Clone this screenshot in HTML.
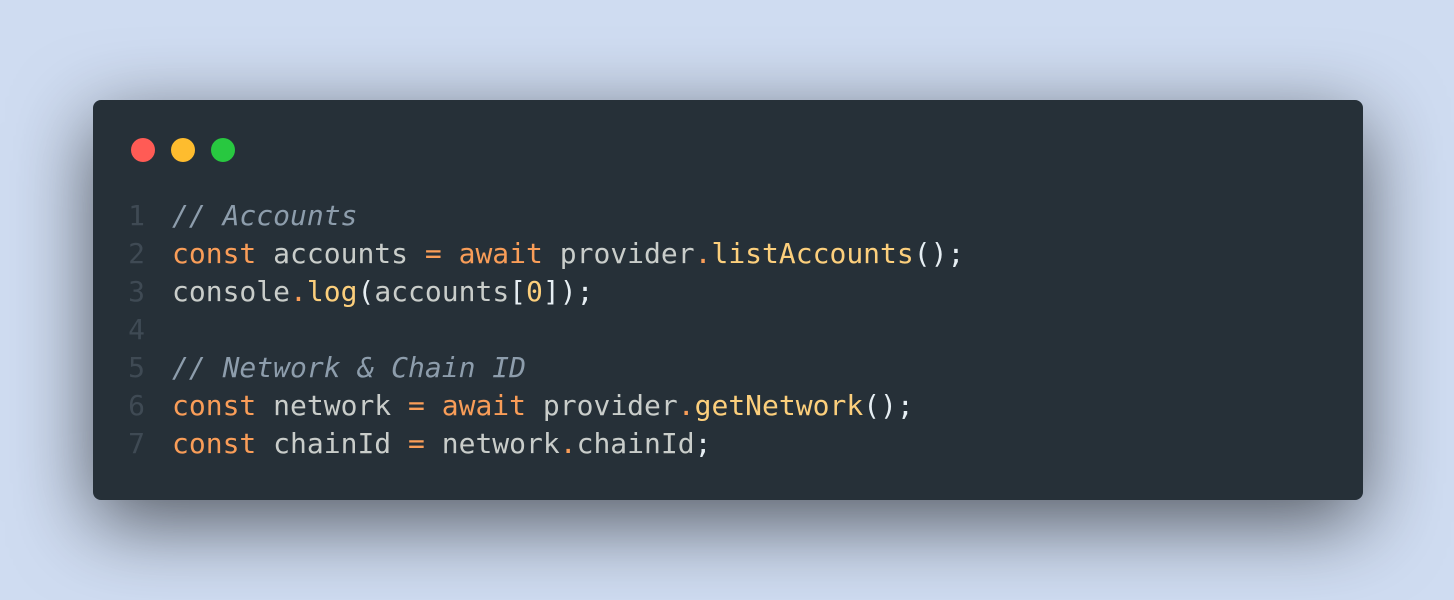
<!DOCTYPE html>
<html><head><style>
html,body{margin:0;padding:0;}
body{width:1454px;height:600px;background:#cfdcf1;position:relative;overflow:hidden;}
.win{position:absolute;left:93px;top:100px;width:1270px;height:400px;background:#263038;border-radius:8px;box-shadow:0 22px 80px rgba(0,0,0,0.6);}
.dot{position:absolute;top:38px;width:24px;height:24px;border-radius:50%;}
pre{position:absolute;left:0;top:97px;margin:0;font-family:"DejaVu Sans Mono","Liberation Mono",monospace;font-size:28px;line-height:38px;color:#c9cdca;}
.ln{display:inline-block;width:52px;text-align:right;color:#3f4a54;margin-right:27px;}
.k{color:#f99d58}.f{color:#fccf7c}.c{color:#8d9dac;font-style:italic}.p{color:#e6eef3}
</style></head><body>
<div class="win">
<div class="dot" style="left:38px;background:#ff5b55"></div>
<div class="dot" style="left:78px;background:#febc2e"></div>
<div class="dot" style="left:118px;background:#28c840"></div>
<pre><span class="ln">1</span><span class="c">// Accounts</span>
<span class="ln">2</span><span class="k">const</span> accounts <span class="k">=</span> <span class="k">await</span> provider<span class="k">.</span><span class="f">listAccounts</span><span class="p">();</span>
<span class="ln">3</span>console<span class="k">.</span><span class="f">log</span><span class="p">(</span>accounts<span class="p">[</span><span class="f">0</span><span class="p">]);</span>
<span class="ln">4</span>
<span class="ln">5</span><span class="c">// Network &amp; Chain ID</span>
<span class="ln">6</span><span class="k">const</span> network <span class="k">=</span> <span class="k">await</span> provider<span class="k">.</span><span class="f">getNetwork</span><span class="p">();</span>
<span class="ln">7</span><span class="k">const</span> chainId <span class="k">=</span> network<span class="k">.</span>chainId<span class="p">;</span></pre>
</div>
</body></html>
